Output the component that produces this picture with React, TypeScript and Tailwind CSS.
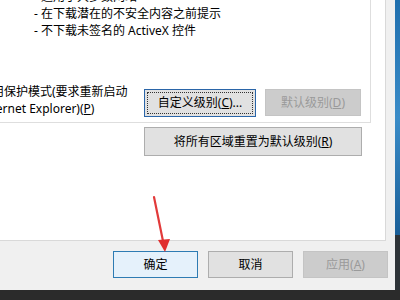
const font = { fontFamily: '"Noto Sans", "Noto Sans CJK SC", sans-serif' };

const RedArrow = () => (
  <svg
    className="absolute left-[140px] top-[190px]"
    width="40"
    height="70"
    viewBox="0 0 40 70"
  >
    <path d="M14 7 L24 56" stroke="#e23a3a" strokeWidth="2.2" strokeLinecap="round" />
    <path d="M18 50 L30 49 L25 62 Z" fill="#e02e2e" />
  </svg>
);

export default function App() {
  return (
    <div
      className="relative w-[400px] h-[300px] overflow-hidden bg-[#f0f0f0] text-[12px] text-black flex flex-col"
      style={font}
    >
      <div className="flex h-[290px]">
        <div className="w-[395px] flex flex-col">
          {/* tab page */}
          <div className="w-[386px] h-[241px] bg-white border-r border-b border-[#d9d9d9] flex flex-col">
            {/* security level group */}
            <div className="w-[371px] h-[123px] border-r border-b border-[#dedede] overflow-hidden flex flex-col">
              <div className="mt-[-12px] ml-[34px] leading-[17px]">
                <div>- 适用于大多数网站</div>
                <div>- 在下载潜在的不安全内容之前提示</div>
                <div>- 不下载未签名的 ActiveX 控件</div>
              </div>
              <div className="mt-[44px] flex items-start">
                <div className="w-[144px] overflow-hidden leading-[17px] whitespace-nowrap">
                  <div className="ml-[-8px]">用保护模式(要求重新启动</div>
                  <div className="ml-[-20px]">
                    Internet Explorer)(<u>P</u>)
                  </div>
                </div>
                <div className="mt-[6px] flex gap-[9px]">
                  <button className="w-[112px] h-[28px] border border-[#2a65a8] bg-[#e1e1e1] p-[2px]">
                    <div className="w-full h-full border border-dotted border-[#333] flex items-center justify-center">
                      自定义级别(<u>C</u>)...
                    </div>
                  </button>
                  <button className="w-[96px] h-[27px] bg-[#cccccc] border border-[#c4c4c4] text-[#9a9a9a] flex items-center justify-center">
                    默认级别(<u>D</u>)
                  </button>
                </div>
              </div>
            </div>
            <button className="ml-[144px] mt-[4px] w-[218px] h-[29px] bg-[#e1e1e1] border border-[#adadad] flex items-center justify-center">
              将所有区域重置为默认级别(<u>R</u>)
            </button>
          </div>
          {/* dialog buttons */}
          <div className="mt-[10px] ml-[113px] flex gap-[10px]">
            <button className="w-[85px] h-[27px] bg-[#e5f1fb] border border-[#2d7bb3] flex items-center justify-center">
              确定
            </button>
            <button className="w-[85px] h-[27px] bg-[#e1e1e1] border border-[#adadad] flex items-center justify-center">
              取消
            </button>
            <button className="w-[85px] h-[27px] bg-[#cccccc] border border-[#c4c4c4] text-[#9a9a9a] flex items-center justify-center">
              应用(<u>A</u>)
            </button>
          </div>
        </div>
        <div className="w-[5px] flex flex-col">
          <div className="h-[235px] bg-gradient-to-b from-[#1f6fae] via-[#3a8cc8] to-[#1a5f98]" />
          <div className="flex-1 bg-[#2e3338]" />
        </div>
      </div>
      <div className="flex-1 bg-[#2b2b2b]" />
      <RedArrow />
    </div>
  );
}
